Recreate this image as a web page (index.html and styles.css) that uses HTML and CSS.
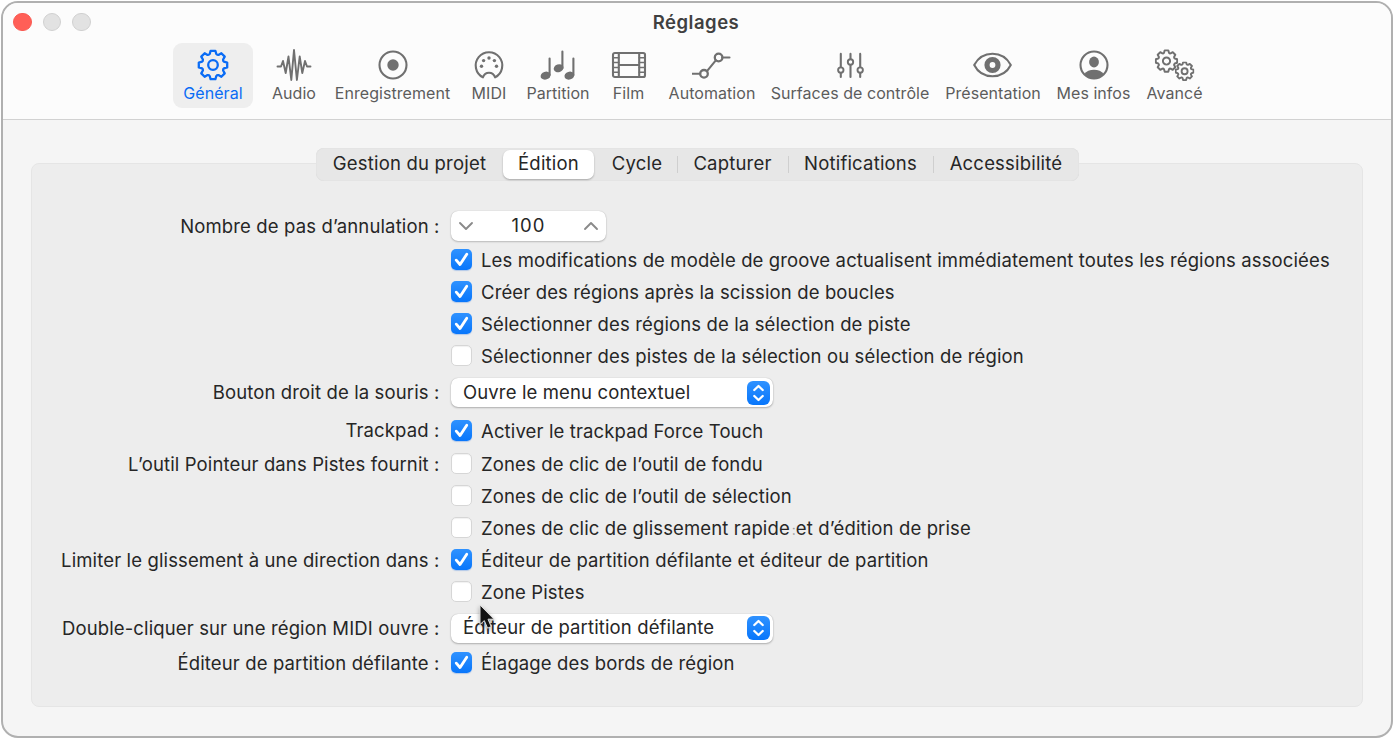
FILE: index.html
```html
<!DOCTYPE html>
<html lang="fr">
<head>
  <meta charset="UTF-8">
  <title>Réglages</title>
  <link rel="stylesheet" href="styles.css">
</head>
<body>

  <!-- Symboles partagés -->
  <svg width="0" height="0" class="defs">
    <symbol id="gear" viewBox="-16 -16 32 32">
      <path d="M-3.3 -11 L-2.4 -14.2 H2.4 L3.3 -11 Q4.06 -9.8 5.44 -10.11 L8.34 -11.74 L11.74 -8.34 L10.11 -5.44 Q9.8 -4.06 11 -3.3 L14.2 -2.4 V2.4 L11 3.3 Q9.8 4.06 10.11 5.44 L11.74 8.34 L8.34 11.74 L5.44 10.11 Q4.06 9.8 3.3 11 L2.4 14.2 H-2.4 L-3.3 11 Q-4.06 9.8 -5.44 10.11 L-8.34 11.74 L-11.74 8.34 L-10.11 5.44 Q-9.8 4.06 -11 3.3 L-14.2 2.4 V-2.4 L-11 -3.3 Q-9.8 -4.06 -10.11 -5.44 L-11.74 -8.34 L-8.34 -11.74 L-5.44 -10.11 Q-4.06 -9.8 -3.3 -11 Z"/>
      <circle r="4.8"/>
    </symbol>
    <symbol id="check" viewBox="0 0 20 20">
      <path d="M5 10.6 L8.6 14.8 L15 5" fill="none" stroke="#fff" stroke-width="2.7" stroke-linecap="round" stroke-linejoin="round"/>
    </symbol>
    <symbol id="arrows" viewBox="0 0 23 24">
      <path d="M7.3 9 L11.5 5 L15.7 9 M7.3 15 L11.5 19 L15.7 15" fill="none" stroke="#fff" stroke-width="2.3" stroke-linecap="round" stroke-linejoin="round"/>
    </symbol>
  </svg>

  <div class="window">
    <header class="header">
      <div class="titlebar">
        <div class="lights">
          <span class="light close"></span>
          <span class="light"></span>
          <span class="light"></span>
        </div>
        <h1>Réglages</h1>
      </div>

      <nav class="toolbar">
        <div class="tool active">
          <svg class="icon" width="32" height="32"><use href="#gear"/></svg>
          <span>Général</span>
        </div>
        <div class="tool">
          <svg class="icon" width="36" height="32" viewBox="0 0 36 32">
            <path d="M1.5 17.5 H5 L7 12 L9.7 24 L12.5 7.5 L15.3 31 L18 1 L20.9 31 L23.7 7.5 L26.3 24 L29 12 L31 17.5 H34.5" stroke-width="1.9"/>
          </svg>
          <span>Audio</span>
        </div>
        <div class="tool">
          <svg class="icon" width="32" height="32" viewBox="0 0 32 32">
            <circle cx="16" cy="16" r="13.5"/>
            <circle cx="16" cy="16" r="5.7" class="solid"/>
          </svg>
          <span>Enregistrement</span>
        </div>
        <div class="tool">
          <svg class="icon" width="32" height="32" viewBox="0 0 32 32">
            <path d="M9.9 28.3 A13.3 13.3 0 1 1 22.1 28.3 C21 25.3 19 23.7 16 23.7 C13 23.7 11 25.3 9.9 28.3 Z"/>
            <g class="solid">
              <circle cx="8.5" cy="17.2" r="1.7"/>
              <circle cx="10.6" cy="11.6" r="1.7"/>
              <circle cx="16" cy="9" r="1.7"/>
              <circle cx="21.4" cy="11.6" r="1.7"/>
              <circle cx="23.5" cy="17.2" r="1.7"/>
            </g>
          </svg>
          <span>MIDI</span>
        </div>
        <div class="tool">
          <svg class="icon" width="36" height="32" viewBox="0 0 36 32">
            <path d="M9.6 9.5 V26 M22.4 2.5 V19 M33.4 9.5 V26"/>
            <g class="solid">
              <ellipse cx="5.6" cy="26.6" rx="5" ry="3.9" transform="rotate(-18 5.6 26.6)"/>
              <ellipse cx="18.6" cy="19.2" rx="5" ry="3.9" transform="rotate(-18 18.6 19.2)"/>
              <ellipse cx="29.4" cy="26.6" rx="5" ry="3.9" transform="rotate(-18 29.4 26.6)"/>
            </g>
          </svg>
          <span>Partition</span>
        </div>
        <div class="tool">
          <svg class="icon" width="36" height="32" viewBox="0 0 36 32">
            <rect x="2" y="4" width="32" height="24" rx="1.8"/>
            <path d="M7.8 4 V28 M28.2 4 V28 M7.8 16 H28.2"/>
            <path d="M2 8.8 H7.8 M2 13.6 H7.8 M2 18.4 H7.8 M2 23.2 H7.8 M28.2 8.8 H34 M28.2 13.6 H34 M28.2 18.4 H34 M28.2 23.2 H34" stroke-width="1.5"/>
          </svg>
          <span>Film</span>
        </div>
        <div class="tool">
          <svg class="icon" width="40" height="32" viewBox="0 0 40 32">
            <path d="M0.5 24.8 H8.2 M15.2 21.9 L23.8 11.3 M30.2 8.5 H37.5"/>
            <circle cx="12" cy="24.8" r="3.8" stroke-width="2.3"/>
            <circle cx="26.6" cy="8.5" r="3.8" stroke-width="2.3"/>
          </svg>
          <span>Automation</span>
        </div>
        <div class="tool">
          <svg class="icon" width="32" height="32" viewBox="0 0 32 32">
            <path d="M6.8 4.9 V18.1 M6.8 24.1 V27.9 M16.5 4.9 V10 M16.5 16 V27.9 M26.2 4.9 V18.1 M26.2 24.1 V27.9"/>
            <circle cx="6.8" cy="21.1" r="2.7" stroke-width="1.9"/>
            <circle cx="16.5" cy="13" r="2.7" stroke-width="1.9"/>
            <circle cx="26.2" cy="21.1" r="2.7" stroke-width="1.9"/>
          </svg>
          <span>Surfaces de contrôle</span>
        </div>
        <div class="tool">
          <svg class="icon" width="42" height="32" viewBox="0 0 42 32">
            <path d="M2.2 16 C6 9 12.5 4.8 20.5 4.8 C28.5 4.8 35 9 38.8 16 C35 23.5 28.5 27.2 20.5 27.2 C12.5 27.2 6 23.5 2.2 16 Z"/>
            <circle cx="20.5" cy="16" r="5.5" stroke-width="5.2"/>
          </svg>
          <span>Présentation</span>
        </div>
        <div class="tool">
          <svg class="icon" width="32" height="32" viewBox="0 0 32 32">
            <circle cx="16" cy="16" r="13.5"/>
            <ellipse cx="16" cy="13" rx="4.9" ry="5.4" class="solid"/>
            <path class="solid" d="M6.2 25.2 C8.2 22.2 12 20.8 16 20.8 C20 20.8 23.8 22.2 25.8 25.2 C23.5 28 20 29.8 16 29.8 C12 29.8 8.5 28 6.2 25.2 Z"/>
          </svg>
          <span>Mes infos</span>
        </div>
        <div class="tool">
          <svg class="icon" width="42" height="32" viewBox="0 0 42 32">
            <svg x="0.5" y="0" width="24" height="24" stroke-width="2.6"><use href="#gear"/></svg>
            <svg x="20.6" y="12.2" width="20" height="20" stroke-width="3"><use href="#gear"/></svg>
          </svg>
          <span>Avancé</span>
        </div>
      </nav>
    </header>

    <main class="content">
      <div class="panel">
        <div class="tabs">
          <div class="tab">Gestion du projet</div>
          <div class="tab selected">Édition</div>
          <div class="tab">Cycle</div>
          <div class="tab divided">Capturer</div>
          <div class="tab divided">Notifications</div>
          <div class="tab divided">Accessibilité</div>
        </div>

        <div class="form">
          <div class="label">Nombre de pas d’annulation :</div>
          <div class="control">
            <div class="stepper">
              <svg width="16" height="12" viewBox="0 0 16 12"><path d="M2 3 L8 9 L14 3"/></svg>
              <span>100</span>
              <svg width="16" height="12" viewBox="0 0 16 12"><path d="M2 9 L8 3 L14 9"/></svg>
            </div>
          </div>

          <div class="control"><span class="box on"><svg><use href="#check"/></svg></span><span class="text">Les modifications de modèle de groove actualisent immédiatement toutes les régions associées</span></div>
          <div class="control"><span class="box on"><svg><use href="#check"/></svg></span><span class="text">Créer des régions après la scission de boucles</span></div>
          <div class="control"><span class="box on"><svg><use href="#check"/></svg></span><span class="text">Sélectionner des régions de la sélection de piste</span></div>
          <div class="control"><span class="box"></span><span class="text">Sélectionner des pistes de la sélection ou sélection de région</span></div>

          <div class="label">Bouton droit de la souris :</div>
          <div class="control">
            <div class="select"><span>Ouvre le menu contextuel</span><i class="toggle"><svg width="23" height="24"><use href="#arrows"/></svg></i></div>
          </div>

          <div class="label">Trackpad :</div>
          <div class="control"><span class="box on"><svg><use href="#check"/></svg></span><span class="text">Activer le trackpad Force Touch</span></div>

          <div class="label">L’outil Pointeur dans Pistes fournit :</div>
          <div class="control"><span class="box"></span><span class="text">Zones de clic de l’outil de fondu</span></div>
          <div class="control"><span class="box"></span><span class="text">Zones de clic de l’outil de sélection</span></div>
          <div class="control"><span class="box"></span><span class="text">Zones de clic de glissement rapide<span class="colon">:</span>et d’édition de prise</span></div>

          <div class="label">Limiter le glissement à une direction dans :</div>
          <div class="control"><span class="box on"><svg><use href="#check"/></svg></span><span class="text">Éditeur de partition défilante et éditeur de partition</span></div>
          <div class="control"><span class="box"></span><span class="text">Zone Pistes</span></div>

          <div class="label">Double-cliquer sur une région MIDI ouvre :</div>
          <div class="control">
            <div class="select">
              <span>Éditeur de partition défilante</span><i class="toggle"><svg width="23" height="24"><use href="#arrows"/></svg></i>
              <svg class="cursor" width="22" height="30" viewBox="0 0 22 30">
                <path d="M3 2 V21.5 L7.3 17.6 L10.6 25.2 L14.2 23.6 L11 16.2 H17 Z" fill="#111" stroke="#ddd" stroke-width="1"/>
              </svg>
            </div>
          </div>

          <div class="label">Éditeur de partition défilante :</div>
          <div class="control"><span class="box on"><svg><use href="#check"/></svg></span><span class="text">Élagage des bords de région</span></div>
        </div>
      </div>
    </main>
  </div>

</body>
</html>
```
FILE: styles.css
```css
* {
  box-sizing: border-box;
}
body {
  margin: 0;
  padding: 1px;
  height: 739px;
  background-color: #fff;
  color: #262626;
  font-family: Inter, "Liberation Sans", sans-serif;
  font-size: 18.5px;
  letter-spacing: 0.13px;
  overflow: hidden;
}
.defs {
  position: absolute;
}
.window {
  width: 1392px;
  height: 737px;
  border: 2px solid #b0b0b0;
  border-radius: 17px;
  background-color: #f5f5f5;
  overflow: hidden;
}

/* Barre de titre et d'outils */
.header {
  height: 117px;
  background-color: #fcfcfc;
  border-bottom: 1px solid #d2d2d2;
}
.titlebar {
  display: grid;
  grid-template-columns: 100px 1fr 102px;
  align-items: center;
  height: 38px;
}
.titlebar h1 {
  margin: 0;
  padding-bottom: 1px;
  font-size: 18.5px;
  font-weight: 600;
  letter-spacing: 0.5px;
  text-align: center;
  color: #404040;
}
.lights {
  display: flex;
  gap: 11px;
  padding-left: 10px;
}
.light {
  width: 18.5px;
  height: 18.5px;
  border: 1px solid #d0d0d0;
  border-radius: 50%;
  background-color: #e2e2e2;
}
.light.close {
  background-color: #ff5f57;
  border-color: #f95a52;
}
.toolbar {
  display: grid;
  grid-template-columns: 80px 50px 115px 46px 60px 49px 86px 158px 96px 73px 57px;
  column-gap: 16px;
  margin-left: 170px;
  margin-top: 2px;
}
.tool {
  display: flex;
  flex-direction: column;
  align-items: center;
  height: 65px;
  padding-top: 6px;
  border-radius: 9px;
  color: #5c5c5c;
  font-size: 16px;
  line-height: 24px;
  letter-spacing: 0.05px;
  white-space: nowrap;
}
.tool.active {
  background-color: #eee;
  color: #0a6cf5;
}
.icon {
  flex: none;
  fill: none;
  stroke: #707070;
  stroke-width: 2.1;
  stroke-linecap: round;
  stroke-linejoin: round;
}
.active .icon {
  stroke: #0a6cf5;
  stroke-width: 2.3;
}
.solid {
  fill: #707070;
  stroke: none;
}

/* Contenu */
.content {
  padding: 43px 28px 0;
}
.panel {
  height: 544px;
  border: 1px solid #e5e5e5;
  border-radius: 8px;
  background-color: #ededed;
}
.tabs {
  display: grid;
  grid-template-columns: 187px 91px 83px 111px 145px 146px;
  width: 763px;
  height: 33px;
  margin: -16px 0 0 284px;
  border-radius: 8px;
  background-color: #e7e7e7;
  box-shadow: inset 0 0 1px #ccc;
}
.tab {
  display: flex;
  align-items: center;
  justify-content: center;
  padding-bottom: 3px;
  letter-spacing: 0.2px;
  white-space: nowrap;
}
.tab.selected {
  margin: 2px 0;
  border-radius: 7px;
  background-color: #fff;
  box-shadow: 0 1px 2px rgba(0,0,0,0.28);
}
.tab.selected + .tab {
  padding-left: 3px;
}
.tab.divided {
  background: linear-gradient(#cfcfcf, #cfcfcf) left 8px / 1px 17px no-repeat;
}

.form {
  display: grid;
  grid-template-columns: 407.5px 1fr;
  grid-template-rows: 34px 33px 32px 32px 32px 41px 35px 32px 32px 32px 32px 32px 40px 30px;
  column-gap: 11.5px;
  margin-top: 28px;
  white-space: nowrap;
}
.label {
  grid-column: 1;
  align-self: center;
  padding-bottom: 1px;
  text-align: right;
}
.control {
  grid-column: 2;
  display: flex;
  align-items: center;
  gap: 9px;
}
.box {
  flex: none;
  width: 21px;
  height: 21px;
  margin-bottom: 1px;
  border: 1px solid #d6d6d6;
  border-radius: 5px;
  background-color: #fff;
  box-shadow: inset 0 1px 1px rgba(0,0,0,0.06);
}
.box svg {
  display: block;
  width: 21px;
  height: 21px;
}
.box.on {
  border: none;
  background: linear-gradient(#2f92ff, #0876fb);
  box-shadow: 0 1px 1px rgba(0,90,220,0.25);
}
.stepper {
  display: flex;
  align-items: center;
  justify-content: space-between;
  width: 155px;
  height: 30px;
  padding: 0 7px;
  border-radius: 7px;
  background-color: #fff;
  box-shadow: 0 0 1px rgba(0,0,0,0.25), 0 1px 2px rgba(0,0,0,0.2);
}
.stepper span {
  padding-bottom: 2px;
  letter-spacing: 1px;
}
.stepper path {
  fill: none;
  stroke: #8a8a8a;
  stroke-width: 1.9;
  stroke-linecap: round;
  stroke-linejoin: round;
}
.select {
  position: relative;
  display: flex;
  align-items: center;
  justify-content: space-between;
  width: 322px;
  height: 29px;
  padding: 0 3px 0 12px;
  border-radius: 7px;
  background-color: #fff;
  box-shadow: 0 0 1px rgba(0,0,0,0.25), 0 1px 2px rgba(0,0,0,0.25);
}
.select span {
  padding-bottom: 2px;
}
.toggle {
  width: 23px;
  height: 24px;
  border-radius: 6px;
  background: linear-gradient(#2f92ff, #0876fb);
}
.toggle svg {
  display: block;
}
.colon {
  display: inline-block;
  width: 6px;
  padding-left: 2px;
  color: #999;
  font-size: 14px;
}
.cursor {
  position: absolute;
  left: 26px;
  top: -11px;
  filter: drop-shadow(0 2px 2px rgba(0,0,0,0.35));
}
```
